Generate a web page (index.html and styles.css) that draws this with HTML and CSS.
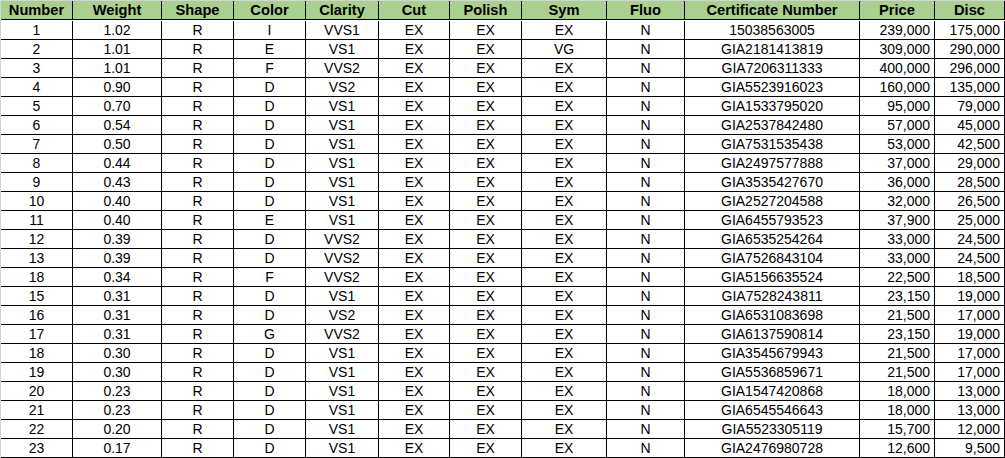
FILE: index.html
```html
<!DOCTYPE html>
<html lang="en">
<head>
<meta charset="utf-8">
<title>Diamond list</title>
<link rel="stylesheet" href="styles.css">
</head>
<body>
<div class="sheet">
  <div class="row head">
    <div class="c">Number</div><div class="c">Weight</div><div class="c">Shape</div><div class="c">Color</div><div class="c">Clarity</div><div class="c">Cut</div><div class="c">Polish</div><div class="c">Sym</div><div class="c">Fluo</div><div class="c">Certificate Number</div><div class="c">Price</div><div class="c">Disc</div>
  </div>
  <div class="row"><div class="c">1</div><div class="c">1.02</div><div class="c">R</div><div class="c">I</div><div class="c">VVS1</div><div class="c">EX</div><div class="c">EX</div><div class="c">EX</div><div class="c">N</div><div class="c">15038563005</div><div class="c num">239,000</div><div class="c num">175,000</div></div>
  <div class="row"><div class="c">2</div><div class="c">1.01</div><div class="c">R</div><div class="c">E</div><div class="c">VS1</div><div class="c">EX</div><div class="c">EX</div><div class="c">VG</div><div class="c">N</div><div class="c">GIA2181413819</div><div class="c num">309,000</div><div class="c num">290,000</div></div>
  <div class="row"><div class="c">3</div><div class="c">1.01</div><div class="c">R</div><div class="c">F</div><div class="c">VVS2</div><div class="c">EX</div><div class="c">EX</div><div class="c">EX</div><div class="c">N</div><div class="c">GIA7206311333</div><div class="c num">400,000</div><div class="c num">296,000</div></div>
  <div class="row"><div class="c">4</div><div class="c">0.90</div><div class="c">R</div><div class="c">D</div><div class="c">VS2</div><div class="c">EX</div><div class="c">EX</div><div class="c">EX</div><div class="c">N</div><div class="c">GIA5523916023</div><div class="c num">160,000</div><div class="c num">135,000</div></div>
  <div class="row"><div class="c">5</div><div class="c">0.70</div><div class="c">R</div><div class="c">D</div><div class="c">VS1</div><div class="c">EX</div><div class="c">EX</div><div class="c">EX</div><div class="c">N</div><div class="c">GIA1533795020</div><div class="c num">95,000</div><div class="c num">79,000</div></div>
  <div class="row"><div class="c">6</div><div class="c">0.54</div><div class="c">R</div><div class="c">D</div><div class="c">VS1</div><div class="c">EX</div><div class="c">EX</div><div class="c">EX</div><div class="c">N</div><div class="c">GIA2537842480</div><div class="c num">57,000</div><div class="c num">45,000</div></div>
  <div class="row"><div class="c">7</div><div class="c">0.50</div><div class="c">R</div><div class="c">D</div><div class="c">VS1</div><div class="c">EX</div><div class="c">EX</div><div class="c">EX</div><div class="c">N</div><div class="c">GIA7531535438</div><div class="c num">53,000</div><div class="c num">42,500</div></div>
  <div class="row"><div class="c">8</div><div class="c">0.44</div><div class="c">R</div><div class="c">D</div><div class="c">VS1</div><div class="c">EX</div><div class="c">EX</div><div class="c">EX</div><div class="c">N</div><div class="c">GIA2497577888</div><div class="c num">37,000</div><div class="c num">29,000</div></div>
  <div class="row"><div class="c">9</div><div class="c">0.43</div><div class="c">R</div><div class="c">D</div><div class="c">VS1</div><div class="c">EX</div><div class="c">EX</div><div class="c">EX</div><div class="c">N</div><div class="c">GIA3535427670</div><div class="c num">36,000</div><div class="c num">28,500</div></div>
  <div class="row"><div class="c">10</div><div class="c">0.40</div><div class="c">R</div><div class="c">D</div><div class="c">VS1</div><div class="c">EX</div><div class="c">EX</div><div class="c">EX</div><div class="c">N</div><div class="c">GIA2527204588</div><div class="c num">32,000</div><div class="c num">26,500</div></div>
  <div class="row"><div class="c">11</div><div class="c">0.40</div><div class="c">R</div><div class="c">E</div><div class="c">VS1</div><div class="c">EX</div><div class="c">EX</div><div class="c">EX</div><div class="c">N</div><div class="c">GIA6455793523</div><div class="c num">37,900</div><div class="c num">25,000</div></div>
  <div class="row"><div class="c">12</div><div class="c">0.39</div><div class="c">R</div><div class="c">D</div><div class="c">VVS2</div><div class="c">EX</div><div class="c">EX</div><div class="c">EX</div><div class="c">N</div><div class="c">GIA6535254264</div><div class="c num">33,000</div><div class="c num">24,500</div></div>
  <div class="row"><div class="c">13</div><div class="c">0.39</div><div class="c">R</div><div class="c">D</div><div class="c">VVS2</div><div class="c">EX</div><div class="c">EX</div><div class="c">EX</div><div class="c">N</div><div class="c">GIA7526843104</div><div class="c num">33,000</div><div class="c num">24,500</div></div>
  <div class="row"><div class="c">18</div><div class="c">0.34</div><div class="c">R</div><div class="c">F</div><div class="c">VVS2</div><div class="c">EX</div><div class="c">EX</div><div class="c">EX</div><div class="c">N</div><div class="c">GIA5156635524</div><div class="c num">22,500</div><div class="c num">18,500</div></div>
  <div class="row"><div class="c">15</div><div class="c">0.31</div><div class="c">R</div><div class="c">D</div><div class="c">VS1</div><div class="c">EX</div><div class="c">EX</div><div class="c">EX</div><div class="c">N</div><div class="c">GIA7528243811</div><div class="c num">23,150</div><div class="c num">19,000</div></div>
  <div class="row"><div class="c">16</div><div class="c">0.31</div><div class="c">R</div><div class="c">D</div><div class="c">VS2</div><div class="c">EX</div><div class="c">EX</div><div class="c">EX</div><div class="c">N</div><div class="c">GIA6531083698</div><div class="c num">21,500</div><div class="c num">17,000</div></div>
  <div class="row"><div class="c">17</div><div class="c">0.31</div><div class="c">R</div><div class="c">G</div><div class="c">VVS2</div><div class="c">EX</div><div class="c">EX</div><div class="c">EX</div><div class="c">N</div><div class="c">GIA6137590814</div><div class="c num">23,150</div><div class="c num">19,000</div></div>
  <div class="row"><div class="c">18</div><div class="c">0.30</div><div class="c">R</div><div class="c">D</div><div class="c">VS1</div><div class="c">EX</div><div class="c">EX</div><div class="c">EX</div><div class="c">N</div><div class="c">GIA3545679943</div><div class="c num">21,500</div><div class="c num">17,000</div></div>
  <div class="row"><div class="c">19</div><div class="c">0.30</div><div class="c">R</div><div class="c">D</div><div class="c">VS1</div><div class="c">EX</div><div class="c">EX</div><div class="c">EX</div><div class="c">N</div><div class="c">GIA5536859671</div><div class="c num">21,500</div><div class="c num">17,000</div></div>
  <div class="row"><div class="c">20</div><div class="c">0.23</div><div class="c">R</div><div class="c">D</div><div class="c">VS1</div><div class="c">EX</div><div class="c">EX</div><div class="c">EX</div><div class="c">N</div><div class="c">GIA1547420868</div><div class="c num">18,000</div><div class="c num">13,000</div></div>
  <div class="row"><div class="c">21</div><div class="c">0.23</div><div class="c">R</div><div class="c">D</div><div class="c">VS1</div><div class="c">EX</div><div class="c">EX</div><div class="c">EX</div><div class="c">N</div><div class="c">GIA6545546643</div><div class="c num">18,000</div><div class="c num">13,000</div></div>
  <div class="row"><div class="c">22</div><div class="c">0.20</div><div class="c">R</div><div class="c">D</div><div class="c">VS1</div><div class="c">EX</div><div class="c">EX</div><div class="c">EX</div><div class="c">N</div><div class="c">GIA5523305119</div><div class="c num">15,700</div><div class="c num">12,000</div></div>
  <div class="row"><div class="c">23</div><div class="c">0.17</div><div class="c">R</div><div class="c">D</div><div class="c">VS1</div><div class="c">EX</div><div class="c">EX</div><div class="c">EX</div><div class="c">N</div><div class="c">GIA2476980728</div><div class="c num">12,600</div><div class="c num">9,500</div></div>
</div>
</body>
</html>
```
FILE: styles.css
```css
html, body {
  margin: 0;
  padding: 0;
  background: #ffffff;
}

.sheet {
  width: 1005px;
  box-sizing: border-box;
  border-left: 1px solid #d4d4d4;
  font-family: "Liberation Sans", Arial, sans-serif;
  font-size: 14px;
  color: #000;
}

.row {
  display: grid;
  grid-template-columns: 72px 89px 72px 72px 73px 71px 72px 85px 78px 175px 75px 70px;
  height: 19px;
}

.c {
  box-sizing: border-box;
  height: 19px;
  line-height: 18px;
  border-right: 1px solid #000;
  border-bottom: 1px solid #000;
  text-align: center;
  white-space: nowrap;
  overflow: hidden;
}

.num {
  text-align: right;
  padding-right: 4px;
}

.head {
  border-top: 1px solid #d4d4d4;
  height: 20px;
}

.head .c {
  background: #a9d08e;
  font-weight: bold;
  font-size: 14.67px;
  line-height: 18px;
}
```
